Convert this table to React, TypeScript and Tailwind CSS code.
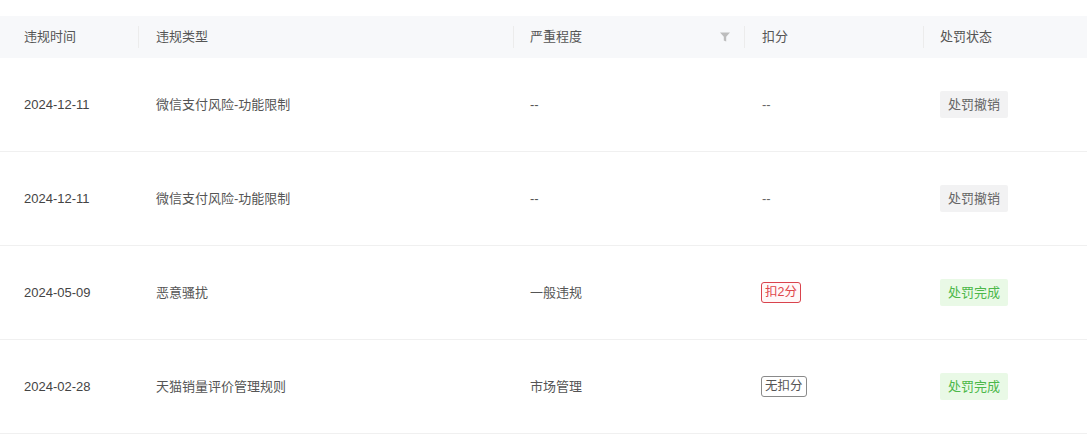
import React from "react";

const font = { fontFamily: '"Liberation Sans", "Noto Sans CJK SC", sans-serif' };

type Row = {
  date: string;
  type: string;
  severity: string;
  deduct: { kind: "none" | "red" | "gray"; text: string };
  status: { kind: "gray" | "green"; text: string };
};

const rows: Row[] = [
  { date: "2024-12-11", type: "微信支付风险-功能限制", severity: "--", deduct: { kind: "none", text: "--" }, status: { kind: "gray", text: "处罚撤销" } },
  { date: "2024-12-11", type: "微信支付风险-功能限制", severity: "--", deduct: { kind: "none", text: "--" }, status: { kind: "gray", text: "处罚撤销" } },
  { date: "2024-05-09", type: "恶意骚扰", severity: "一般违规", deduct: { kind: "red", text: "扣2分" }, status: { kind: "green", text: "处罚完成" } },
  { date: "2024-02-28", type: "天猫销量评价管理规则", severity: "市场管理", deduct: { kind: "gray", text: "无扣分" }, status: { kind: "green", text: "处罚完成" } },
];

function Divider() {
  return <span className="absolute left-0 top-1/2 -translate-y-1/2 h-[22px] w-px bg-[#ececec]" />;
}

function FilterIcon() {
  return (
    <svg width="10" height="10" viewBox="0 0 10 10" className="text-[#bdbdbd]">
      <path d="M0 0.5h10L6.2 4.8V9.6L3.8 8.4V4.8Z" fill="currentColor" />
    </svg>
  );
}

export default function App() {
  return (
    <div className="w-[1087px] h-[440px] bg-white overflow-hidden pt-4" style={font}>
      <div className="flex h-[42px] bg-[#f7f8fa] text-[13px] text-[#555] items-center">
        <div className="w-[138px] pl-6 shrink-0">违规时间</div>
        <div className="relative w-[375px] pl-[18px] shrink-0 h-full flex items-center">
          <Divider />违规类型
        </div>
        <div className="relative w-[231px] pl-[17px] pr-[14px] shrink-0 h-full flex items-center justify-between">
          <Divider />
          <span>严重程度</span>
          <FilterIcon />
        </div>
        <div className="relative w-[179px] pl-[18px] shrink-0 h-full flex items-center">
          <Divider />扣分
        </div>
        <div className="relative flex-1 pl-[17px] h-full flex items-center">
          <Divider />处罚状态
        </div>
      </div>
      {rows.map((r, i) => (
        <div key={i} className="flex h-[94px] border-b border-[#f0f0f0] items-center text-[13px] text-[#444]">
          <div className="w-[138px] pl-6 shrink-0">{r.date}</div>
          <div className="w-[375px] pl-[18px] shrink-0 text-[#555]">{r.type}</div>
          <div className="w-[231px] pl-[17px] shrink-0 text-[#555]">{r.severity}</div>
          <div className="w-[179px] pl-[17px] shrink-0">
            {r.deduct.kind === "none" && <span className="text-[#666] pl-[1px]">{r.deduct.text}</span>}
            {r.deduct.kind === "red" && (
              <span className="inline-flex items-center h-[21px] px-[3px] border border-[#d9434d] rounded-[3px] text-[#e0454a] bg-[#fff8f8] text-[12.5px] leading-none">
                {r.deduct.text}
              </span>
            )}
            {r.deduct.kind === "gray" && (
              <span className="inline-flex items-center h-[21px] px-[3px] border border-[#8a8a8a] rounded-[3px] text-[#555] bg-white text-[12.5px] leading-none">
                {r.deduct.text}
              </span>
            )}
          </div>
          <div className="flex-1 pl-[17px]">
            {r.status.kind === "gray" ? (
              <span className="inline-flex items-center h-[27px] px-2 bg-[#f2f2f3] text-[#666] rounded-[2px] leading-none">
                {r.status.text}
              </span>
            ) : (
              <span className="inline-flex items-center h-[27px] px-2 bg-[#e9f9e6] text-[#4cb84a] rounded-[2px] leading-none">
                {r.status.text}
              </span>
            )}
          </div>
        </div>
      ))}
    </div>
  );
}
